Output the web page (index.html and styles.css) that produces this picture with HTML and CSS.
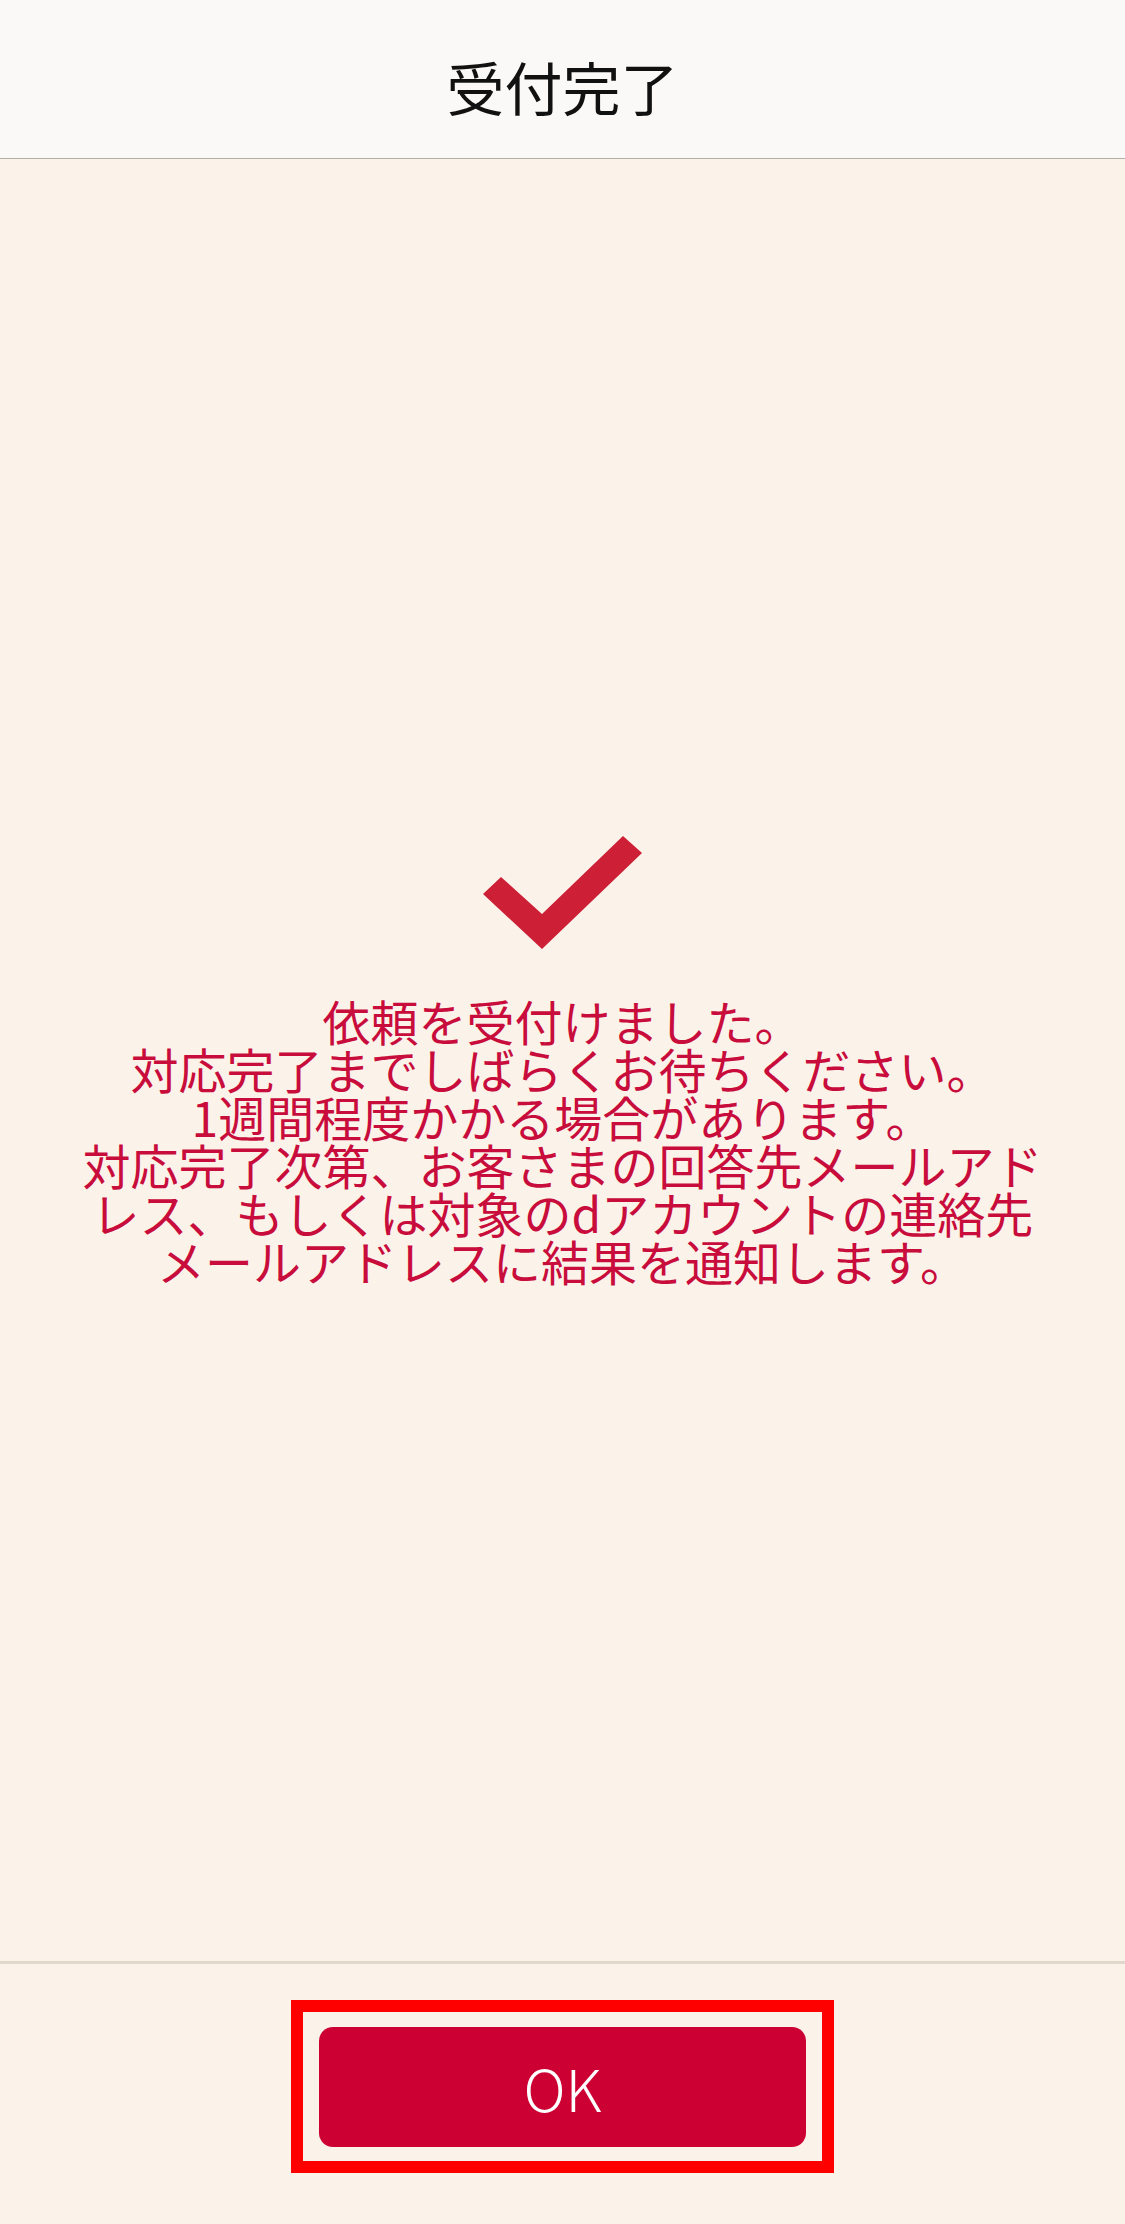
FILE: index.html
```html
<!DOCTYPE html>
<html lang="ja">
<head>
<meta charset="utf-8">
<title>受付完了</title>
<link rel="stylesheet" href="styles.css">
</head>
<body>
<div class="screen">
  <header class="header">
    <h1 class="title">受付完了</h1>
  </header>
  <main class="main">
    <svg class="check" width="159" height="113" viewBox="0 0 159 113" aria-hidden="true">
      <polygon points="0,58 18,41 59,78 140,0 159,17 59,113" fill="#cd1f36"/>
    </svg>
    <p class="message">依頼を受付けました。<br>対応完了までしばらくお待ちください。<br>1週間程度かかる場合があります。<br>対応完了次第、お客さまの回答先メールアド<br>レス、もしくは対象のdアカウントの連絡先<br>メールアドレスに結果を通知します。</p>
  </main>
  <footer class="footer">
    <div class="highlight">
      <button class="ok-button" type="button">OK</button>
    </div>
  </footer>
</div>
</body>
</html>
```

FILE: styles.css
```css
html, body {
  margin: 0;
  padding: 0;
}
body {
  background: #fbf3ea;
  font-family: "Noto Sans CJK JP", "Noto Sans", sans-serif;
}
.screen {
  width: 1125px;
  height: 2224px;
  display: flex;
  flex-direction: column;
  background: #fbf3ea;
}
.header {
  height: 158px;
  flex: 0 0 158px;
  background: #fbf9f7;
  border-bottom: 1px solid #b3aea9;
  display: flex;
  align-items: center;
  justify-content: center;
}
.title {
  margin: 0;
  font-size: 58px;
  font-weight: 400;
  color: #111;
  line-height: 1;
  padding-top: 14px;
}
.main {
  flex: 1;
  display: flex;
  flex-direction: column;
  align-items: center;
  justify-content: center;
}
.check {
  display: block;
  margin-bottom: 47px;
}
.message {
  margin: 0;
  width: 1010px;
  text-align: center;
  font-size: 48px;
  line-height: 48px;
  color: #c80c3c;
}
.footer {
  box-sizing: border-box;
  flex: 0 0 263px;
  height: 263px;
  border-top: 3px solid #e1d8cb;
  display: flex;
  justify-content: center;
  align-items: flex-start;
  padding-top: 36px;
}
.highlight {
  border: 12px solid #ff0000;
  padding: 15px 16px 14px 16px;
}
.ok-button {
  display: block;
  width: 487px;
  height: 120px;
  border: none;
  border-radius: 14px;
  background: #cc0033;
  color: #fff;
  font-family: "Noto Sans CJK JP", "Noto Sans", sans-serif;
  font-size: 58px;
  font-weight: 300;
  padding: 0;
  cursor: pointer;
}
```
